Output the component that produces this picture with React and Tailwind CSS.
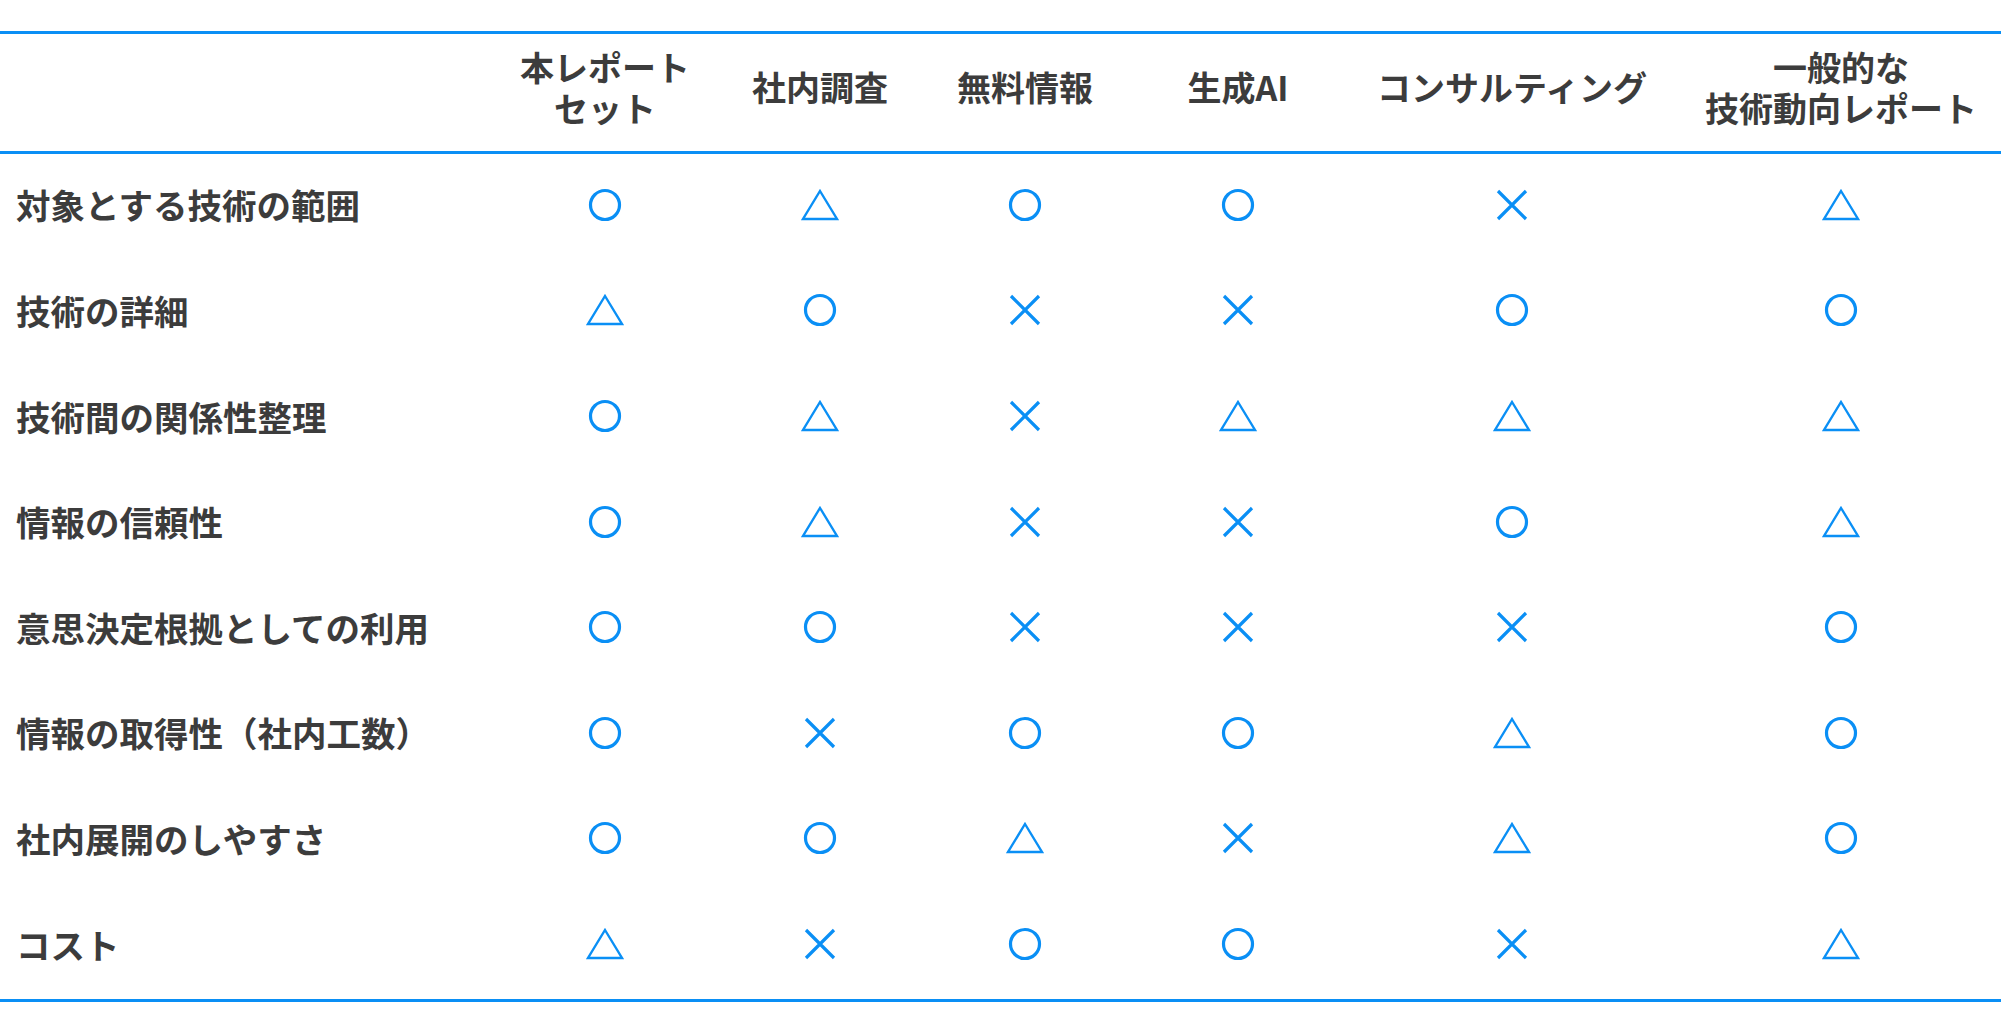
import React from 'react';

const FONT = { fontFamily: '"Noto Sans CJK JP", "Noto Sans", sans-serif' };

const HEADERS = [
  ['本レポート', 'セット'],
  ['社内調査'],
  ['無料情報'],
  ['生成AI'],
  ['コンサルティング'],
  ['一般的な', '技術動向レポート'],
];

// o = good, t = partial, x = bad
const ROWS = [
  ['対象とする技術の範囲', 'o t o o x t'],
  ['技術の詳細', 't o x x o o'],
  ['技術間の関係性整理', 'o t x t t t'],
  ['情報の信頼性', 'o t x x o t'],
  ['意思決定根拠としての利用', 'o o x x x o'],
  ['情報の取得性（社内工数）', 'o x o o t o'],
  ['社内展開のしやすさ', 'o o t x t o'],
  ['コスト', 't x o o x t'],
];

function Mark({ kind }) {
  if (kind === 'o') {
    return (
      <svg width="34" height="34" viewBox="0 0 34 34" className="-mt-1">
        <circle cx="17" cy="17" r="14.5" fill="none" stroke="#0a8ff5" strokeWidth="3.2" />
      </svg>
    );
  }
  if (kind === 't') {
    return (
      <svg width="38" height="34" viewBox="0 0 38 34" className="-mt-1">
        <polygon points="19,3 36,31 2,31" fill="none" stroke="#0a8ff5" strokeWidth="2.4" strokeLinejoin="miter" />
      </svg>
    );
  }
  return (
    <svg width="32" height="32" viewBox="0 0 32 32" className="-mt-1">
      <path d="M2 2 L30 30 M30 2 L2 30" stroke="#0a8ff5" strokeWidth="3.2" strokeLinecap="butt" />
    </svg>
  );
}

export default function App() {
  return (
    <div className="min-h-screen bg-white pt-[31px]" style={FONT}>
      <div className="border-y-[3px] border-[#0a8ff5]">
        <div className="grid grid-cols-[487px_236px_194px_216px_210px_338px_1fr] h-[120px] border-b-[3px] border-[#0a8ff5] items-center">
          <div />
          {HEADERS.map((lines, i) => (
            <div key={i} className="text-center text-[34px] leading-[41px] font-bold text-[#3c3c3c] -mt-[12px]">
              {lines.map((l) => (
                <div key={l}>{l}</div>
              ))}
            </div>
          ))}
        </div>
        {ROWS.map(([label, marks]) => (
          <div
            key={label}
            className="grid grid-cols-[487px_236px_194px_216px_210px_338px_1fr] h-[105.6px] items-center"
          >
            <div className="pl-4 text-[34.5px] font-bold text-[#3c3c3c] whitespace-nowrap -mt-[3px]">{label}</div>
            {marks.split(' ').map((m, j) => (
              <div key={j} className="flex justify-center items-center">
                <Mark kind={m} />
              </div>
            ))}
          </div>
        ))}
      </div>
    </div>
  );
}
